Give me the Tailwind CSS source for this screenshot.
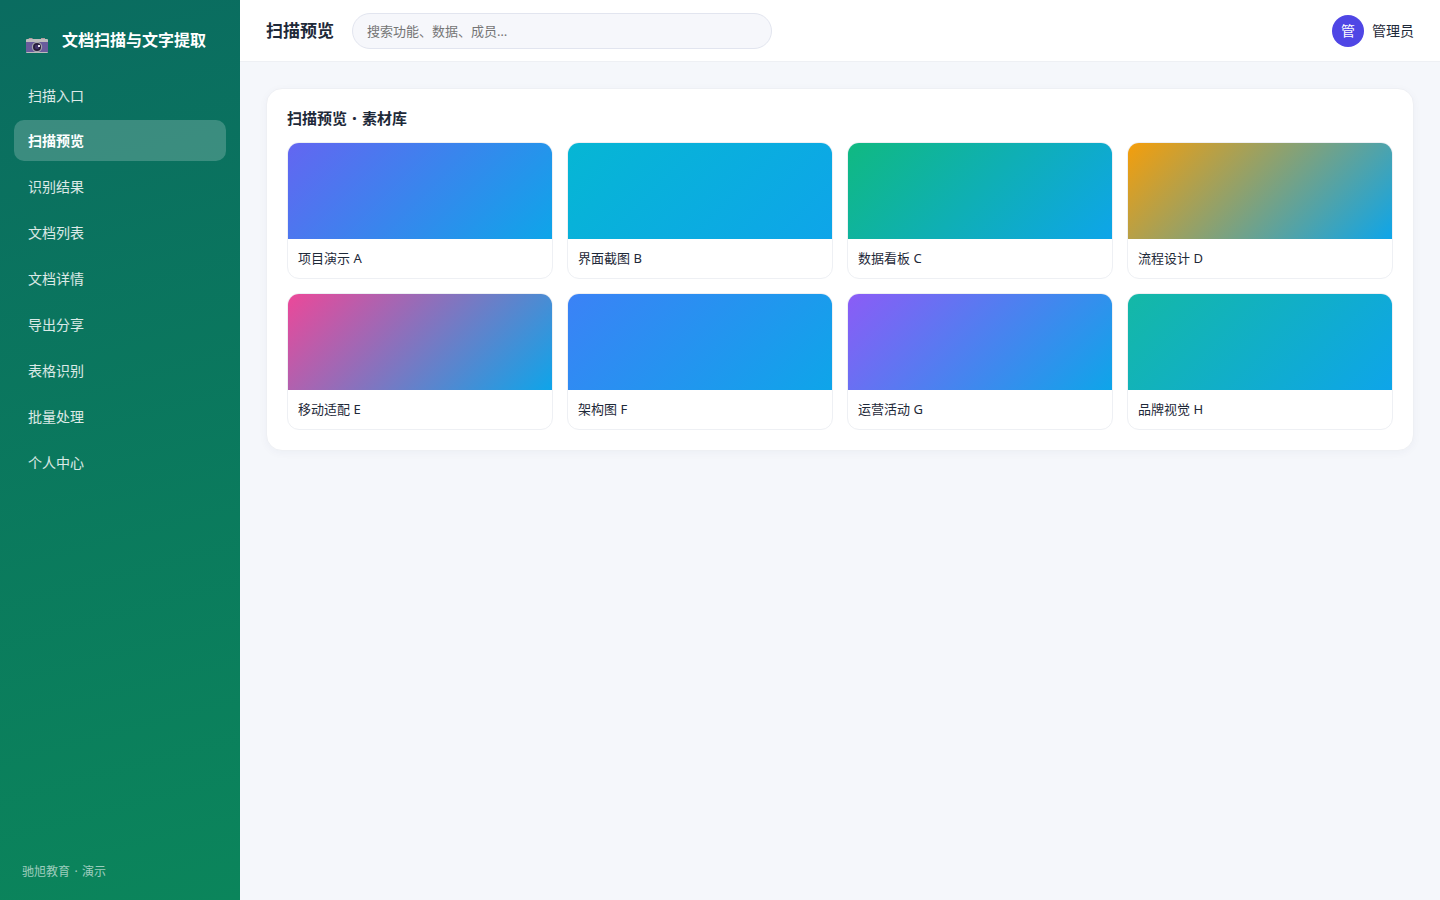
<!DOCTYPE html>
<html lang="zh-CN">
<head>
    <meta charset="UTF-8">
    <meta name="viewport" content="width=device-width, initial-scale=1.0">
    <title>文档扫描与文字提取</title>
    <script src="https://cdn.jsdelivr.net/npm/@tailwindcss/browser@4"></script>
</head>
<body class="flex h-screen overflow-hidden bg-[#f5f7fb] text-sm text-gray-800 font-['Noto_Sans','Noto_Sans_CJK_SC',sans-serif]">
    <aside class="flex w-60 shrink-0 flex-col bg-[linear-gradient(165deg,#0a6c60,#0b855b)] px-3.5 pt-[18px] pb-[18px] text-white">
        <div class="flex h-[44px] items-center gap-3.5 pl-3">
            <svg class="mt-[11px] h-[15px] w-[22px] shrink-0" viewBox="0 0 22 15">
                <path d="M3 0h3l1 1H2.500zM15 0h4v1h-4z" fill="#b5999c"/>
                <rect y="1" width="22" height="14" rx="1" fill="#bcbcbc"/>
                <path d="M0 4h22v10H0z" fill="#695c9c"/>
                <circle cx="11" cy="9" r="5.200" fill="#a6a6ac"/>
                <circle cx="11" cy="9" r="4" fill="#291e3d"/>
                <circle cx="11" cy="9" r="2.200" fill="#43356c"/>
                <rect x="12" y="7" width="2" height="2" fill="#e8e4ef"/>
            </svg>
            <span class="whitespace-nowrap text-base font-bold leading-6">文档扫描与文字提取</span>
        </div>
        <nav class="mt-[12px] flex flex-col gap-[5px] leading-[21px] text-white/85">
            <a class="rounded-[10px] px-3.5 pt-[11px] pb-[9px]">扫描入口</a>
            <a class="rounded-[10px] bg-white/20 px-3.5 py-2.5 font-bold text-white">扫描预览</a>
            <a class="rounded-[10px] px-3.5 py-2.5">识别结果</a>
            <a class="rounded-[10px] px-3.5 py-2.5">文档列表</a>
            <a class="rounded-[10px] px-3.5 py-2.5">文档详情</a>
            <a class="rounded-[10px] px-3.5 py-2.5">导出分享</a>
            <a class="rounded-[10px] px-3.5 py-2.5">表格识别</a>
            <a class="rounded-[10px] px-3.5 py-2.5">批量处理</a>
            <a class="rounded-[10px] px-3.5 py-2.5">个人中心</a>
        </nav>
        <div class="mt-auto px-2 text-xs leading-5 text-white/60">驰旭教育<span class="inline-block w-3 text-center">·</span>演示</div>
    </aside>

    <div class="flex flex-1 flex-col">
        <header class="flex h-[62px] items-center border-b border-[#eef0f4] bg-white px-[26px]">
            <h1 class="pt-0.5 text-[17px] font-bold">扫描预览</h1>
            <input type="text" placeholder="搜索功能、数据、成员…" class="ml-[18px] h-9 w-[420px] rounded-full border border-[#e2e5ef] bg-[#f6f7fb] px-3.5 text-[13px] placeholder:text-[#757575]">
            <div class="ml-auto flex items-center gap-2">
                <div class="flex size-8 items-center justify-center rounded-full bg-[#4f46e5] text-white">管</div>
                <span class="pt-px">管理员</span>
            </div>
        </header>

        <main class="p-[26px]">
            <section class="rounded-2xl border border-[#eef0f4] bg-white p-5 shadow-[0_2px_8px_rgba(30,41,90,0.04)]">
                <h2 class="mb-3.5 text-[15px] font-bold leading-[19px]">扫描预览<span class="inline-block w-[15px] text-center font-black">·</span>素材库</h2>
                <div class="grid grid-cols-4 gap-3.5 text-[13px] leading-[19px]">
                    <div class="overflow-hidden rounded-xl border border-[#eef0f4]">
                        <div class="h-24 bg-[linear-gradient(135deg,#6366f1,#0ea5e9)]"></div>
                        <div class="px-2.5 py-2.5">项目演示 A</div>
                    </div>
                    <div class="overflow-hidden rounded-xl border border-[#eef0f4]">
                        <div class="h-24 bg-[linear-gradient(135deg,#06b6d4,#0ea5e9)]"></div>
                        <div class="px-2.5 py-2.5">界面截图 B</div>
                    </div>
                    <div class="overflow-hidden rounded-xl border border-[#eef0f4]">
                        <div class="h-24 bg-[linear-gradient(135deg,#10b981,#0ea5e9)]"></div>
                        <div class="px-2.5 py-2.5">数据看板 C</div>
                    </div>
                    <div class="overflow-hidden rounded-xl border border-[#eef0f4]">
                        <div class="h-24 bg-[linear-gradient(135deg,#f59e0b,#0ea5e9)]"></div>
                        <div class="px-2.5 py-2.5">流程设计 D</div>
                    </div>
                    <div class="overflow-hidden rounded-xl border border-[#eef0f4]">
                        <div class="h-24 bg-[linear-gradient(135deg,#ec4899,#0ea5e9)]"></div>
                        <div class="px-2.5 py-2.5">移动适配 E</div>
                    </div>
                    <div class="overflow-hidden rounded-xl border border-[#eef0f4]">
                        <div class="h-24 bg-[linear-gradient(135deg,#3b82f6,#0ea5e9)]"></div>
                        <div class="px-2.5 py-2.5">架构图 F</div>
                    </div>
                    <div class="overflow-hidden rounded-xl border border-[#eef0f4]">
                        <div class="h-24 bg-[linear-gradient(135deg,#8b5cf6,#0ea5e9)]"></div>
                        <div class="px-2.5 py-2.5">运营活动 G</div>
                    </div>
                    <div class="overflow-hidden rounded-xl border border-[#eef0f4]">
                        <div class="h-24 bg-[linear-gradient(135deg,#14b8a6,#0ea5e9)]"></div>
                        <div class="px-2.5 py-2.5">品牌视觉 H</div>
                    </div>
                </div>
            </section>
        </main>
    </div>
</body>
</html>
